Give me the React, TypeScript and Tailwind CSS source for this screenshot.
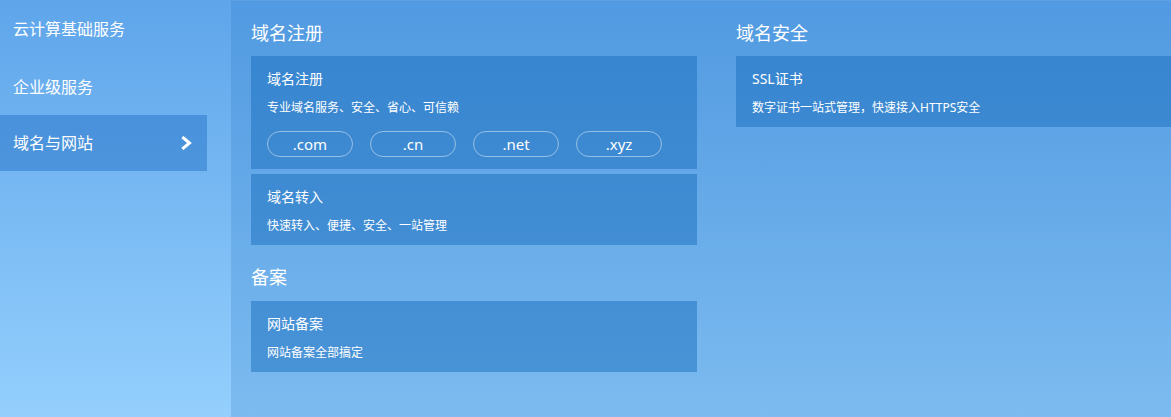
import React from "react";

const FONT = {
  fontFamily: '"Noto Sans", "Noto Sans CJK SC", sans-serif',
};

function Chevron() {
  return (
    <svg width="12" height="14" viewBox="0 0 12 14" className="shrink-0">
      <polyline
        points="2.5,2 8.5,7 2.5,12"
        fill="none"
        stroke="white"
        strokeWidth="3"
        strokeLinecap="square"
        strokeLinejoin="miter"
      />
    </svg>
  );
}

function Card({
  title,
  desc,
  children,
}: {
  title: string;
  desc: string;
  children?: React.ReactNode;
}) {
  return (
    <div className="bg-[rgba(26,109,190,0.5)] px-[16px] pt-[13px] pb-[10px] text-white">
      <div className="text-[14px] leading-[20px]">{title}</div>
      <div className="mt-[10px] text-[12px] leading-[18px]">{desc}</div>
      {children}
    </div>
  );
}

export default function App() {
  const tlds = [".com", ".cn", ".net", ".xyz"];
  return (
    <div
      className="flex h-[417px] w-full overflow-hidden bg-gradient-to-b from-[#5ea5ea] to-[#94cffd] text-white"
      style={FONT}
    >
      {/* Sidebar */}
      <div className="w-[231px] shrink-0">
        <div className="flex h-[58px] items-center pl-[13px] text-[16px]">云计算基础服务</div>
        <div className="flex h-[57px] items-center pl-[13px] text-[16px]">企业级服务</div>
        <div className="flex h-[56px] w-[207px] items-center justify-between bg-[rgba(37,116,199,0.5)] pl-[13px] pr-[14px] text-[16px]">
          <span>域名与网站</span>
          <Chevron />
        </div>
      </div>

      {/* Main panel */}
      <div className="flex-1 overflow-hidden border-t border-[rgba(255,255,255,0.08)] bg-[rgba(30,110,190,0.2)] pl-[20px] pt-[20px]">
        <div className="flex gap-[39px]">
          <div className="w-[446px] shrink-0">
            <div className="mb-[11px] text-[18px] leading-[24px]">域名注册</div>
            <div className="flex flex-col gap-[5px]">
              <Card title="域名注册" desc="专业域名服务、安全、省心、可信赖">
                <div className="mb-[2px] mt-[14px] flex gap-[17px]">
                  {tlds.map((t) => (
                    <div
                      key={t}
                      className="flex h-[26px] w-[86px] items-center justify-center rounded-full border border-[rgba(255,255,255,0.45)] text-[15px]"
                    >
                      {t}
                    </div>
                  ))}
                </div>
              </Card>
              <Card title="域名转入" desc="快速转入、便捷、安全、一站管理" />
            </div>
            <div className="mb-[12px] mt-[20px] text-[18px] leading-[24px]">备案</div>
            <Card title="网站备案" desc="网站备案全部搞定" />
          </div>
          <div className="w-[446px] shrink-0">
            <div className="mb-[11px] text-[18px] leading-[24px]">域名安全</div>
            <Card title="SSL证书" desc="数字证书一站式管理，快速接入HTTPS安全" />
          </div>
        </div>
      </div>
    </div>
  );
}
